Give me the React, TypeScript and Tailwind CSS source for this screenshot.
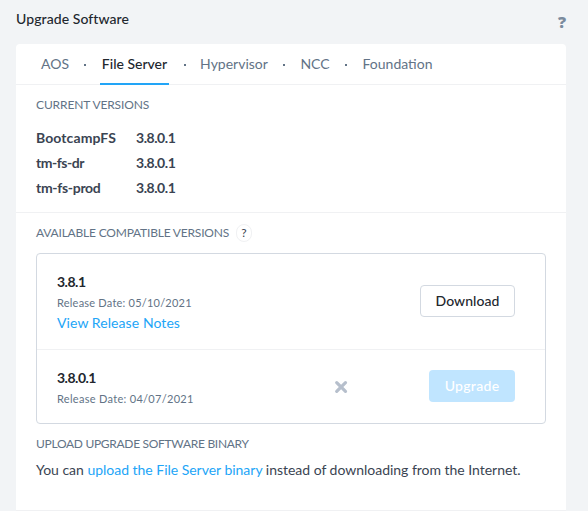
import { Fragment } from "react";

const tabs = [
  { label: "AOS", width: "w-[28px]", gap: "" },
  { label: "File Server", width: "w-[69px]", gap: "w-[31px]", active: true },
  { label: "Hypervisor", width: "w-[68px]", gap: "w-[31px]" },
  { label: "NCC", width: "w-[30px]", gap: "w-8" },
  { label: "Foundation", width: "w-[71px]", gap: "w-8" },
];

const servers = [
  { name: "BootcampFS", tracking: "tracking-[0.1px]" },
  { name: "tm-fs-dr", tracking: "tracking-[-0.45px]" },
  { name: "tm-fs-prod", tracking: "tracking-[-0.3px]" },
];

export default function App() {
  return (
    <div className="h-[511px] w-[588px] overflow-hidden bg-[#f2f4f6] px-4 font-['Lato','Liberation_Sans',sans-serif] text-sm text-[#3a4452]">
      <header className="flex h-11 justify-between">
        <h1 className="pt-[9px] leading-5 font-medium tracking-[0.08px] text-[#22272e]">Upgrade Software</h1>
        <button className="mr-[6px] h-fit pt-3 font-['Open_Sans',sans-serif] text-base leading-5 font-extrabold text-[#7b8b9d]">?</button>
      </header>
      <main className="w-[550px] rounded-t-[4px] bg-white">
        <nav className="flex h-[41px] items-stretch border-b border-[#f0f1f3] pl-[25px] text-[#627386]">
          {tabs.map((tab, i) => (
            <Fragment key={tab.label}>
              {i > 0 && (
                <span className={`${tab.gap} flex items-center justify-center pt-[2px]`}>
                  <span className="size-[2px] bg-[#627386]" />
                </span>
              )}
              <button
                className={`${tab.width} flex h-[41px] justify-center leading-[40px] whitespace-nowrap ${
                  tab.active ? "border-b-2 border-[#22a5f7] font-medium text-[#22272e]" : ""
                }`}
              >
                {tab.label}
              </button>
            </Fragment>
          ))}
        </nav>
        <section className="h-[128px] border-b border-[#f0f1f3] px-5 pt-3">
          <h2 className="text-xs leading-4 tracking-[-0.12px] text-[#627386]">CURRENT VERSIONS</h2>
          <div className="pt-3">
            {servers.map((server) => (
              <div key={server.name} className="flex h-[25px] items-center font-bold">
                <span className={`w-[100px] ${server.tracking}`}>{server.name}</span>
                <span className="tracking-[-0.45px]">3.8.0.1</span>
              </div>
            ))}
          </div>
        </section>
        <section className="px-5 pt-2">
          <div className="flex h-6 items-center gap-[7px]">
            <h2 className="text-xs tracking-[-0.2px] text-[#627386]">AVAILABLE COMPATIBLE VERSIONS</h2>
            <span className="flex h-[18px] w-4 items-center justify-center rounded-full border border-[#f0f1f3] text-xs">?</span>
          </div>
          <div className="mt-2 h-[171px] rounded-[4px] border border-[#d3d9e1]">
            <div className="flex h-24 items-center justify-between border-b border-[#f0f1f3] pr-[30px] pl-5">
              <div className="pt-[2px]">
                <div className="leading-5 font-bold tracking-[-0.5px] text-[#22272e]">3.8.1</div>
                <div className="pt-px text-[11px] leading-5 tracking-[0.22px] text-[#627386]">Release Date: 05/10/2021</div>
                <a className="block leading-5 tracking-[0.08px] text-[#22a5f7]">View Release Notes</a>
              </div>
              <button className="mb-px h-8 w-[95px] rounded-[4px] border border-[#d3d9e1] pb-px font-medium tracking-[0.05px] text-[#22272e]">Download</button>
            </div>
            <div className="flex h-[73px] items-center pr-[30px] pl-5">
              <div className="w-[277px] pt-[4px]">
                <div className="leading-5 font-bold tracking-[-0.5px] text-[#22272e]">3.8.0.1</div>
                <div className="pt-px text-[11px] leading-5 tracking-[0.3px] text-[#627386]">Release Date: 04/07/2021</div>
              </div>
              <svg className="size-[14px]" viewBox="0 0 14 14" stroke="#b6bfcc" strokeWidth="3.2" strokeLinecap="round">
                <path d="M2.7 2.6l8.8 8.8M11.5 2.6L2.7 11.4" />
              </svg>
              <button className="mb-[2px] ml-auto h-8 w-[86px] rounded-[4px] bg-[#c0e5ff] font-medium tracking-[0.3px] text-white">Upgrade</button>
            </div>
          </div>
          <h2 className="mt-3 text-xs leading-4 tracking-[-0.3px] text-[#627386]">UPLOAD UPGRADE SOFTWARE BINARY</h2>
          <p className="pt-[8px] leading-5 tracking-[-0.02px] whitespace-nowrap">
            You can <a className="text-[#22a5f7]">upload the File Server binary</a> instead of downloading from the Internet.
          </p>
          <div className="h-[31px]" />
        </section>
        <div className="-mt-px h-px bg-[#f0f1f3]" />
      </main>
    </div>
  );
}
